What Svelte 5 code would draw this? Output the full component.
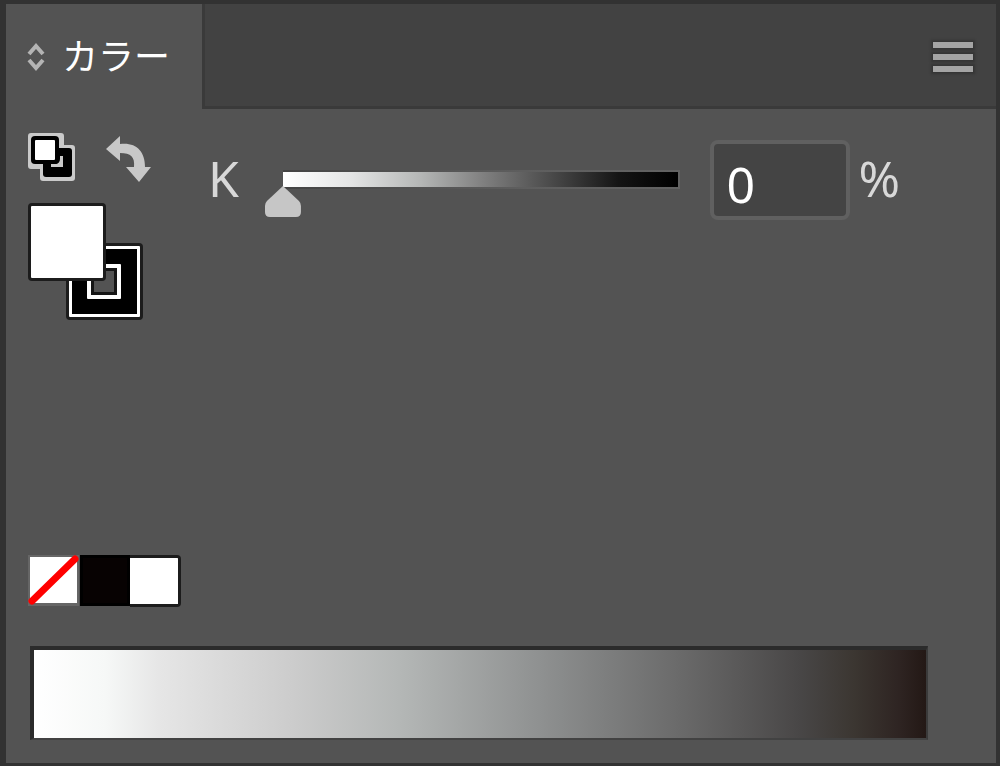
<script lang="ts">
	let black = $state(0);
</script>

<section class="panel">
	<header class="tab-bar">
		<button class="tab" type="button">
			<svg class="tab-arrows" width="20" height="32" viewBox="0 0 20 32" aria-hidden="true">
				<path d="M3 13 L10 5 L17 13 M3 19 L10 27 L17 19" />
			</svg>
			<span>カラー</span>
		</button>
		<button class="menu" type="button" aria-label="Panel menu">
			<span></span>
			<span></span>
			<span></span>
		</button>
	</header>

	<div class="content">
		<div class="controls">
			<div class="swatch-tools">
				<div class="small-tools">
					<button type="button" aria-label="Default fill and stroke">
						<svg width="48" height="50" viewBox="0 0 48 50">
							<path
								d="M3 0H33Q36 0 36 3V12H44Q47 12 47 15V45Q47 48 44 48H15Q12 48 12 45V36H3Q0 36 0 33V3Q0 0 3 0Z"
								fill="#cacaca"
							/>
							<rect x="15" y="15" width="29" height="29" rx="3" fill="#000" />
							<path d="M32 23H35V34H23V31H28Q32 30 32 26Z" fill="#cacaca" />
							<rect x="3" y="3" width="28" height="28" rx="4" fill="#000" />
							<rect x="7" y="7" width="20" height="20" rx="1" fill="#fff" />
						</svg>
					</button>
					<button type="button" aria-label="Swap fill and stroke">
						<svg width="46" height="50" viewBox="0 0 46 50">
							<path
								d="M0 16L14 3V11C30 9 39 18 39 34H45L33 49L20 34H28C29 24 25 20 14 20V28Z"
								fill="#c8c8c8"
							/>
						</svg>
					</button>
				</div>
				<button type="button" aria-label="Fill and stroke">
					<svg width="116" height="118" viewBox="0 0 116 118">
						<rect x="38" y="40" width="77" height="77" rx="4" fill="#1c1c1c" />
						<rect x="41" y="43" width="71" height="71" rx="1" fill="#fff" />
						<rect x="44" y="46" width="65" height="65" fill="#000" />
						<rect x="59" y="61" width="34" height="35" rx="1" fill="#fff" />
						<rect x="63" y="65" width="26" height="27" fill="#151515" />
						<rect x="66" y="68" width="20" height="21" fill="#535353" />
						<rect x="0" y="0" width="78" height="78" rx="4" fill="#1c1c1c" />
						<rect x="3" y="3" width="72" height="72" rx="1" fill="#fff" />
					</svg>
				</button>
			</div>

			<div class="channel">
				<label for="k-slider">K</label>
				<input id="k-slider" class="slider" type="range" min="0" max="100" bind:value={black} />
				<input id="k-value" class="value" type="text" aria-label="K value" bind:value={black} />
				<label for="k-value">%</label>
			</div>
		</div>

		<div class="spectrum">
			<div class="quick-colors">
				<button type="button" aria-label="None">
					<svg width="52" height="54" viewBox="0 0 52 54">
						<rect x="0" y="0" width="51" height="51" fill="#666" />
						<rect x="2" y="2" width="47" height="46" fill="#fff" />
						<path d="M4 46L47 4" stroke="#f00" stroke-width="7" stroke-linecap="round" />
					</svg>
				</button>
				<button class="black" type="button" aria-label="Black"></button>
				<button class="white" type="button" aria-label="White"></button>
			</div>
			<button class="ramp" type="button" aria-label="Grayscale ramp"></button>
		</div>
	</div>
</section>

<style>
	:global(body) {
		margin: 0;
		background: #535353;
	}

	.panel {
		box-sizing: border-box;
		display: flex;
		flex-direction: column;
		min-height: 100vh;
		border: 4px solid #323232;
		border-left-width: 6px;
		border-bottom-width: 3px;
		background: #535353;
		color: #d8d8d8;
		font-family: 'Noto Sans', 'Noto Sans CJK JP', sans-serif;
	}

	button {
		display: block;
		padding: 0;
		border: none;
		background: none;
		color: inherit;
		font: inherit;
	}

	svg {
		display: block;
	}

	.tab-bar {
		display: flex;
		justify-content: space-between;
		height: 105px;
		background: #424242;
		box-shadow: inset 0 -3px #3a3a3a;
	}

	.tab {
		display: flex;
		align-items: center;
		gap: 16px;
		padding: 0 32px 0 20px;
		border-right: 3px solid #3a3a3a;
		background: #535353;
		color: #fff;
		font-family: 'Noto Sans CJK JP', sans-serif;
		font-size: 36px;
		font-weight: 400;
		line-height: 48px;
	}

	.tab span {
		padding-bottom: 6px;
	}

	.tab-arrows path {
		fill: none;
		stroke: #b4b4b4;
		stroke-width: 4;
	}

	.menu {
		display: flex;
		flex-direction: column;
		justify-content: center;
		gap: 6px;
		margin-right: 23px;
	}

	.menu span {
		width: 40px;
		height: 6px;
		background: #a4a4a4;
		box-shadow: 0 0 2px 2px #353535;
	}

	.content {
		flex: 1;
		display: flex;
		flex-direction: column;
		justify-content: space-between;
		gap: 40px;
		padding: 24px 68px 23px 22px;
	}

	.controls {
		display: flex;
		align-items: flex-start;
		gap: 56px;
	}

	.small-tools {
		display: flex;
		gap: 30px;
		margin-bottom: 20px;
	}

	.channel {
		flex: 1;
		display: flex;
		align-items: center;
		height: 80px;
		margin: 7px 28px 0 0;
		font-size: 50px;
		line-height: 56px;
	}

	.channel label {
		padding-bottom: 4px;
	}

	.slider {
		flex: 1;
		min-width: 0;
		height: 48px;
		margin: 28px 14px 0 26px;
		appearance: none;
		background: none;
	}

	.slider::-webkit-slider-runnable-track {
		height: 48px;
		background:
			linear-gradient(to right, #fff, #e4e5e5 17%, #b4b6b5 35%, #828282 50%, #535353 65%, #141414 85%, #000)
				18px 2px / calc(100% - 36px) 15px no-repeat,
			linear-gradient(to right, #444, #5e5e5e 60%, #626262) 18px 0 / calc(100% - 34px) 19px no-repeat;
	}

	.slider::-webkit-slider-thumb {
		width: 36px;
		height: 32px;
		margin-top: 16px;
		appearance: none;
		background: #c6c6c6;
		clip-path: path('M18 0 L34 15 Q36 17 36 20 V26 Q36 31 31 31 H5 Q0 31 0 26 V20 Q0 17 2 15 Z');
	}

	.value {
		box-sizing: border-box;
		width: 140px;
		height: 80px;
		margin-right: 8px;
		padding: 8px 12px 0;
		border: 4px solid #606060;
		border-radius: 8px;
		background: #444;
		color: #fff;
		font: inherit;
	}

	.quick-colors {
		display: flex;
		width: 154px;
		height: 53px;
		margin-bottom: 38px;
	}

	.black {
		width: 50px;
		height: 51px;
		border: 3px solid #000;
		background: #070202;
	}

	.white {
		width: 51px;
		height: 52px;
		border: 3px solid #1c1c1c;
		border-left: none;
		border-radius: 0 4px 4px 0;
		background: #fff;
	}

	.ramp {
		box-sizing: border-box;
		width: calc(100% - 2px);
		height: 94px;
		margin-left: 2px;
		border: 4px solid #2b2b2b;
		border-right: 2px solid #3a3a3a;
		border-bottom: 2px solid #424242;
		background: linear-gradient(
			to right,
			#fff,
			#f6f8f7 8%,
			#e6e6e6 14%,
			#cccccc 29%,
			#b4b7b6 41%,
			#8e9090 57%,
			#6b6b6b 72%,
			#484646 86%,
			#3b3631 92%,
			#2e2422 97%,
			#231815
		);
	}
</style>
